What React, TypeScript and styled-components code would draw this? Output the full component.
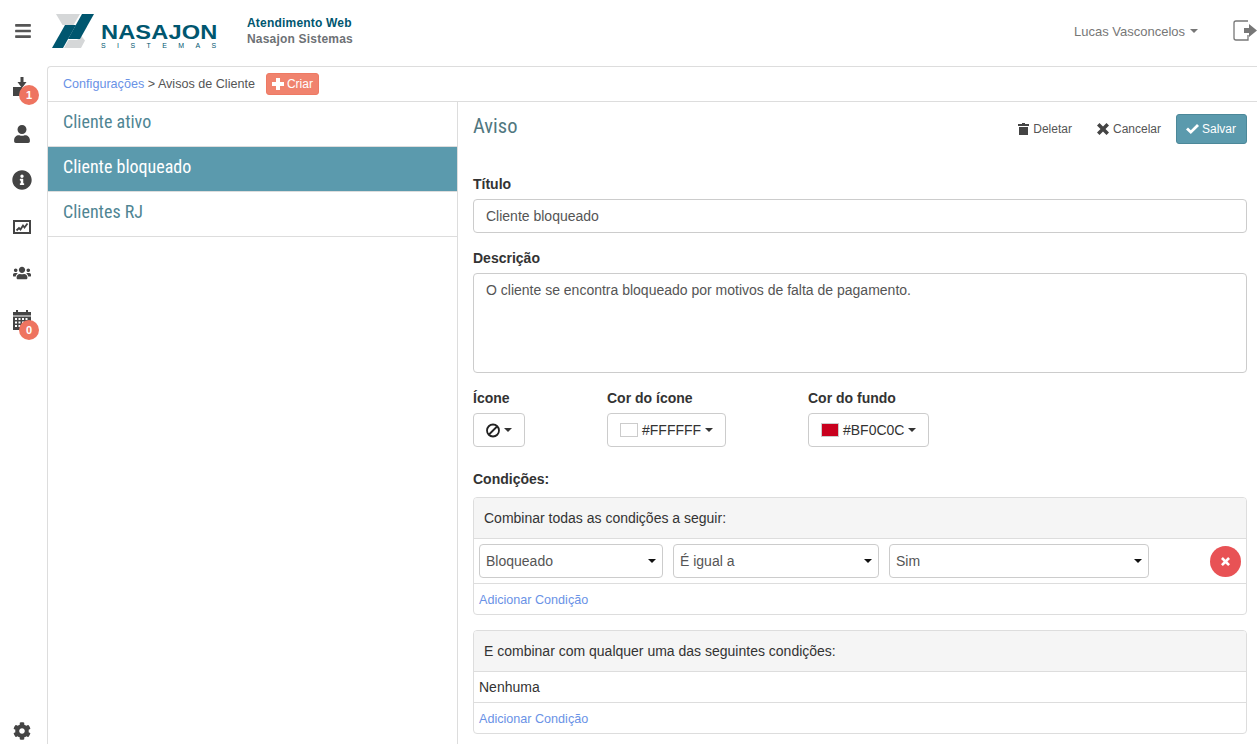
import React from 'react';
import styled, { createGlobalStyle } from 'styled-components';
import { FaBars, FaUser, FaInfoCircle, FaUsers, FaCog } from 'react-icons/fa';

const GlobalStyle = createGlobalStyle`
  html, body {
    margin: 0;
    height: 100%;
    overflow: hidden;
    background: #fff;
  }
  body {
    font-family: "Liberation Sans", Arial, sans-serif;
    font-size: 14px;
    color: #333;
  }
  * { box-sizing: border-box; }
`;

const Page = styled.div`
  display: flex;
  flex-direction: column;
  height: 744px;
`;

const Header = styled.header`
  display: flex;
  align-items: center;
  height: 66px;
  flex: none;
  padding: 0 0 4px 14px;
`;

const MenuButton = styled.div`
  display: flex;
  color: #555;
  font-size: 18px;
  width: 38px;
`;

const Logo = styled.div`
  display: flex;
  align-items: center;
  width: 195px;
  gap: 7px;
`;

const Wordmark = styled.div`
  display: flex;
  flex-direction: column;
  color: #00566f;
  font-weight: bold;
  margin-top: 9px;
`;

const WordmarkName = styled.span`
  display: block;
  font-size: 21px;
  line-height: 20px;
  height: 20px;
  letter-spacing: 0.1px;
  transform: scaleX(1.125);
  transform-origin: left;
`;

const WordmarkSub = styled.span`
  display: block;
  font-size: 7px;
  font-weight: normal;
  line-height: 7px;
  height: 7px;
  letter-spacing: 11.4px;
`;

const AppTitle = styled.div`
  font-size: 12px;
  font-weight: bold;
  line-height: 16px;
  letter-spacing: 0.2px;
  margin-top: -1px;
  flex: 1;
`;

const AppName = styled.div`
  color: #00566f;
`;

const AppCompany = styled.div`
  color: #6d7175;
`;

const UserMenu = styled.div`
  display: flex;
  align-items: center;
  gap: 5px;
  font-size: 13px;
  color: #777;
  margin-right: 35px;
`;

const Caret = styled.span`
  display: inline-block;
  width: 0;
  height: 0;
  border-left: 4px solid transparent;
  border-right: 4px solid transparent;
  border-top: 4px solid currentColor;
`;

const LogoutLink = styled.div`
  display: flex;
  margin-top: -1px;
`;

const Body = styled.div`
  display: flex;
  flex: 1;
  min-height: 0;
`;

const Sidebar = styled.nav`
  display: flex;
  flex-direction: column;
  width: 47px;
  flex: none;
  gap: 4.5px;
  padding-bottom: 2px;
`;

const SideItem = styled.div<{ $bottom?: boolean }>`
  position: relative;
  display: flex;
  align-items: center;
  justify-content: center;
  height: 42px;
  width: 44px;
  font-size: 18px;
  color: #444;
  ${(p) => p.$bottom && 'margin-top: auto; height: 22px;'}
`;

const Badge = styled.span<{ $top: number }>`
  position: absolute;
  left: 19px;
  top: ${(p) => p.$top}px;
  width: 20px;
  height: 20px;
  border-radius: 50%;
  background: #ee7460;
  color: #fff;
  font-size: 11px;
  font-weight: bold;
  line-height: 20px;
  text-align: center;
`;

const Panel = styled.main`
  flex: 1;
  display: flex;
  flex-direction: column;
  min-width: 0;
  border-top: 1px solid #ddd;
  border-left: 1px solid #ddd;
  border-top-left-radius: 4px;
`;

const Breadcrumb = styled.div`
  display: flex;
  align-items: center;
  height: 35px;
  flex: none;
  padding: 0 0 1px 15px;
  font-size: 12.6px;
  color: #555;
  border-bottom: 1px solid #ddd;
`;

const Link = styled.a`
  color: #6a92e6;
  text-decoration: none;
`;

const CreateButton = styled.span`
  display: inline-flex;
  align-items: center;
  gap: 3px;
  height: 22px;
  margin-left: 11px;
  padding: 0 5px;
  background: #f0836e;
  border: 1px solid #ee7a64;
  border-radius: 3px;
  color: #fff;
  font-size: 12px;
`;

const Split = styled.div`
  display: flex;
  flex: 1;
  min-height: 0;
`;

const ListColumn = styled.div`
  width: 410px;
  flex: none;
  border-right: 1px solid #ddd;
`;

const ListRow = styled.div<{ $active?: boolean }>`
  height: 45px;
  padding: 0 15px;
  border-bottom: 1px solid #ddd;
  background: ${(p) => (p.$active ? '#5b9aad' : '#fff')};
  color: ${(p) => (p.$active ? '#fff' : '#4f8593')};
  font-family: Roboto, sans-serif;
  font-stretch: 75%;
  font-size: 18px;
  line-height: 40px;
`;

const Form = styled.div`
  flex: 1;
  min-width: 0;
  padding: 0 10px 0 15px;
`;

const FormTop = styled.div`
  display: flex;
  align-items: flex-start;
  justify-content: space-between;
  padding-top: 12px;
  height: 72px;
`;

const FormTitle = styled.h2`
  margin: 0;
  color: #51777f;
  font-family: Roboto, sans-serif;
  font-stretch: 75%;
  font-weight: 400;
  font-size: 20.500px;
  line-height: 24px;
`;

const Actions = styled.div`
  display: flex;
  align-items: center;
  height: 30px;
`;

const GhostButton = styled.span<{ $gap: number }>`
  display: flex;
  align-items: center;
  gap: 4px;
  font-size: 12px;
  color: #555;
  margin-right: ${(p) => p.$gap}px;
`;

const SaveButton = styled.span`
  display: flex;
  align-items: center;
  justify-content: center;
  gap: 3px;
  width: 71px;
  height: 30px;
  padding-right: 1px;
  background: #5b9aad;
  border: 1px solid #4c8899;
  border-radius: 3px;
  color: #fff;
  font-size: 12px;
`;

const Label = styled.label`
  display: block;
  font-weight: bold;
  line-height: 20px;
  margin-bottom: 5px;
`;

const Field = styled.div`
  margin-bottom: 15px;
`;

const TextInput = styled.input`
  display: block;
  width: 100%;
  height: 34px;
  padding: 6px 12px;
  border: 1px solid #ccc;
  border-radius: 4px;
  font: inherit;
  color: #555;
  outline: none;
`;

const TextArea = styled.textarea`
  display: block;
  width: 100%;
  height: 100px;
  padding: 6px 12px;
  border: 1px solid #ccc;
  border-radius: 4px;
  font: inherit;
  line-height: 20px;
  color: #555;
  outline: none;
  resize: none;
`;

const PickerRow = styled.div`
  display: flex;
  margin-top: 15px;
  margin-bottom: 22px;
`;

const PickerField = styled.div<{ $width: number }>`
  width: ${(p) => p.$width}px;
`;

const PickerButton = styled.span`
  display: inline-flex;
  align-items: center;
  gap: 4px;
  height: 34px;
  padding: 0 12px;
  border: 1px solid #ccc;
  border-radius: 4px;
  color: #333;
`;

const Swatch = styled.span<{ $color: string }>`
  width: 18px;
  height: 14px;
  background: ${(p) => p.$color};
  border: 1px solid #ccc;
`;

const SectionLabel = styled.div`
  font-weight: bold;
  line-height: 20px;
  margin-bottom: 8px;
`;

const ConditionPanel = styled.section`
  border: 1px solid #ddd;
  border-radius: 4px;
  margin-bottom: 15px;
`;

const ConditionHeading = styled.div`
  height: 41px;
  padding: 0 10px;
  display: flex;
  align-items: center;
  background: #f5f5f5;
  border-bottom: 1px solid #ddd;
  border-radius: 3px 3px 0 0;
`;

const ConditionRow = styled.div`
  display: flex;
  align-items: center;
  height: 45px;
  padding: 0 5px;
  gap: 10px;
  border-bottom: 1px solid #ddd;
`;

const SelectBox = styled.div<{ $width: number }>`
  position: relative;
  width: ${(p) => p.$width}px;
  &::after {
    content: '';
    position: absolute;
    right: 7px;
    top: 15px;
    border-left: 4px solid transparent;
    border-right: 4px solid transparent;
    border-top: 4px solid #111;
  }
`;

const Select = styled.select`
  display: block;
  width: 100%;
  height: 34px;
  padding: 0 6px;
  appearance: none;
  background: #fff;
  border: 1px solid #ccc;
  border-radius: 4px;
  font: inherit;
  color: #555;
  outline: none;
`;

const RemoveButton = styled.span`
  display: flex;
  align-items: center;
  justify-content: center;
  width: 31px;
  height: 31px;
  margin-left: auto;
  border-radius: 50%;
  background: #e85255;
`;

const EmptyRow = styled.div`
  height: 31px;
  padding: 0 5px;
  line-height: 30px;
  border-bottom: 1px solid #ddd;
`;

const AddRow = styled.div`
  height: 30px;
  padding: 1px 5px 0;
  line-height: 30px;
  font-size: 12.6px;
`;

const NasajonMark = () => (
  <svg width="42" height="34" viewBox="0 0 42 34">
    <path d="M4 0h24l-6.500 11H10.500z" fill="#d5d7d8" />
    <path d="M27 19l6 7.500-4 7.500H12l4.500-8h9z" fill="#d5d7d8" />
    <path d="M30 0h12L28 25H16z" fill="#00566f" />
    <path d="M13 11h11L11 34H0z" fill="#00566f" />
  </svg>
);

const DownloadBoxIcon = () => (
  <svg width="18" height="20" viewBox="0 0 18 20" fill="#444">
    <path d="M7.500 0h3v5h3L9 11 4.500 5h3z" />
    <rect x="0" y="10" width="9" height="9" />
  </svg>
);

const StatsIcon = () => (
  <svg width="18" height="14" viewBox="0 0 18 14">
    <rect width="18" height="14" fill="#444" />
    <rect x="2" y="2" width="14" height="10" fill="#fff" />
    <path
      d="M3.500 10.500l2.500-2.500 1.500 1.500L10 5.500l1.500 2 3-4"
      fill="none"
      stroke="#444"
      strokeWidth="1.800"
    />
  </svg>
);

const CalendarIcon = () => (
  <svg width="18" height="20" viewBox="0 0 18 20" fill="#444">
    <rect x="3" y="0" width="2" height="3" />
    <rect x="13" y="0" width="2" height="3" />
    <rect x="0" y="2" width="18" height="3.500" />
    <path
      fillRule="evenodd"
      d="M0 6.500h18V20H0zM2 8v2h2V8zm3.500 0v2h2V8zM9 8v2h2V8zm3.500 0v2h2V8zM2 11.500v2h2v-2zm3.500 0v2h2v-2zm3.500 0v2h2v-2zm3.500 0v2h2v-2zM2 15v2h2v-2zm3.500 0v2h2v-2zM9 15v2h2v-2z"
    />
  </svg>
);

const LogoutIcon = () => (
  <svg width="24" height="22" viewBox="0 0 24 22">
    <path
      d="M15 1H3a2 2 0 0 0-2 2v15a2 2 0 0 0 2 2h12V15"
      fill="none"
      stroke="#777"
      strokeWidth="1.300"
    />
    <path d="M11 8h5V4l8 6.500-8 6.500v-4h-5z" fill="#777" />
  </svg>
);

const BanIcon = () => (
  <svg width="14" height="15" viewBox="0 0 14 15" fill="none" stroke="#222" strokeWidth="1.800">
    <circle cx="7" cy="7.500" r="6" />
    <path d="M3 11.500l8-8" />
  </svg>
);

const PlusIcon = () => (
  <svg width="12" height="12" viewBox="0 0 12 12" fill="#fff">
    <path d="M4 0h4v4h4v4H8v4H4V8H0V4h4z" />
  </svg>
);

const TrashIcon = () => (
  <svg width="11" height="12" viewBox="0 0 11 12" fill="#444">
    <path d="M4 0h3v1h4v2H0V1h4zM1 4h9v8H1z" />
  </svg>
);

const CrossIcon = ({ size, color }: { size: number; color: string }) => (
  <svg width={size} height={size} viewBox="0 0 12 12" fill={color}>
    <path d="M2.500 0L6 3.500 9.500 0 12 2.500 8.500 6 12 9.500 9.500 12 6 8.500 2.500 12 0 9.500 3.500 6 0 2.500z" />
  </svg>
);

const CheckIcon = () => (
  <svg width="13" height="10" viewBox="0 0 13 10" fill="#fff">
    <path d="M0 5.500L2 3.500 4.800 6.300 11 0l2 2-8.200 8z" />
  </svg>
);

const sideItems = [
  { id: 'tasks', icon: <DownloadBoxIcon />, badge: 1, badgeTop: 19 },
  { id: 'user', icon: <FaUser /> },
  { id: 'info', icon: <FaInfoCircle size={20} /> },
  { id: 'stats', icon: <StatsIcon /> },
  { id: 'team', icon: <FaUsers /> },
  { id: 'calendar', icon: <CalendarIcon />, badge: 0, badgeTop: 21.5 },
];

const notices = ['Cliente ativo', 'Cliente bloqueado', 'Clientes RJ'];

export default function App() {
  return (
    <Page>
      <GlobalStyle />
      <Header>
        <MenuButton>
          <FaBars />
        </MenuButton>
        <Logo>
          <NasajonMark />
          <Wordmark>
            <WordmarkName>NASAJON</WordmarkName>
            <WordmarkSub>SISTEMAS</WordmarkSub>
          </Wordmark>
        </Logo>
        <AppTitle>
          <AppName>Atendimento Web</AppName>
          <AppCompany>Nasajon Sistemas</AppCompany>
        </AppTitle>
        <UserMenu>
          Lucas Vasconcelos <Caret />
        </UserMenu>
        <LogoutLink>
          <LogoutIcon />
        </LogoutLink>
      </Header>
      <Body>
        <Sidebar>
          {sideItems.map((item) => (
            <SideItem key={item.id}>
              {item.icon}
              {item.badge !== undefined && <Badge $top={item.badgeTop}>{item.badge}</Badge>}
            </SideItem>
          ))}
          <SideItem $bottom>
            <FaCog />
          </SideItem>
        </Sidebar>
        <Panel>
          <Breadcrumb>
            <Link>Configurações</Link>&nbsp;&gt; Avisos de Cliente
            <CreateButton>
              <PlusIcon /> Criar
            </CreateButton>
          </Breadcrumb>
          <Split>
            <ListColumn>
              {notices.map((name) => (
                <ListRow key={name} $active={name === 'Cliente bloqueado'}>
                  {name}
                </ListRow>
              ))}
            </ListColumn>
            <Form>
              <FormTop>
                <FormTitle>Aviso</FormTitle>
                <Actions>
                  <GhostButton $gap={25}>
                    <TrashIcon /> Deletar
                  </GhostButton>
                  <GhostButton $gap={15}>
                    <CrossIcon size={12} color="#444" /> Cancelar
                  </GhostButton>
                  <SaveButton>
                    <CheckIcon /> Salvar
                  </SaveButton>
                </Actions>
              </FormTop>
              <Field>
                <Label>Título</Label>
                <TextInput readOnly value="Cliente bloqueado" />
              </Field>
              <Field>
                <Label>Descrição</Label>
                <TextArea
                  readOnly
                  value="O cliente se encontra bloqueado por motivos de falta de pagamento."
                />
              </Field>
              <PickerRow>
                <PickerField $width={134}>
                  <Label>Ícone</Label>
                  <PickerButton>
                    <BanIcon /> <Caret />
                  </PickerButton>
                </PickerField>
                <PickerField $width={201}>
                  <Label>Cor do ícone</Label>
                  <PickerButton>
                    <Swatch $color="#fff" /> #FFFFFF <Caret />
                  </PickerButton>
                </PickerField>
                <PickerField $width={200}>
                  <Label>Cor do fundo</Label>
                  <PickerButton>
                    <Swatch $color="#c8001e" /> #BF0C0C <Caret />
                  </PickerButton>
                </PickerField>
              </PickerRow>
              <SectionLabel>Condições:</SectionLabel>
              <ConditionPanel>
                <ConditionHeading>Combinar todas as condições a seguir:</ConditionHeading>
                <ConditionRow>
                  <SelectBox $width={184}>
                    <Select defaultValue="Bloqueado">
                      <option>Bloqueado</option>
                    </Select>
                  </SelectBox>
                  <SelectBox $width={206}>
                    <Select defaultValue="É igual a">
                      <option>É igual a</option>
                    </Select>
                  </SelectBox>
                  <SelectBox $width={260}>
                    <Select defaultValue="Sim">
                      <option>Sim</option>
                    </Select>
                  </SelectBox>
                  <RemoveButton>
                    <CrossIcon size={9} color="#fff" />
                  </RemoveButton>
                </ConditionRow>
                <AddRow>
                  <Link>Adicionar Condição</Link>
                </AddRow>
              </ConditionPanel>
              <ConditionPanel>
                <ConditionHeading>E combinar com qualquer uma das seguintes condições:</ConditionHeading>
                <EmptyRow>Nenhuma</EmptyRow>
                <AddRow>
                  <Link>Adicionar Condição</Link>
                </AddRow>
              </ConditionPanel>
            </Form>
          </Split>
        </Panel>
      </Body>
    </Page>
  );
}
